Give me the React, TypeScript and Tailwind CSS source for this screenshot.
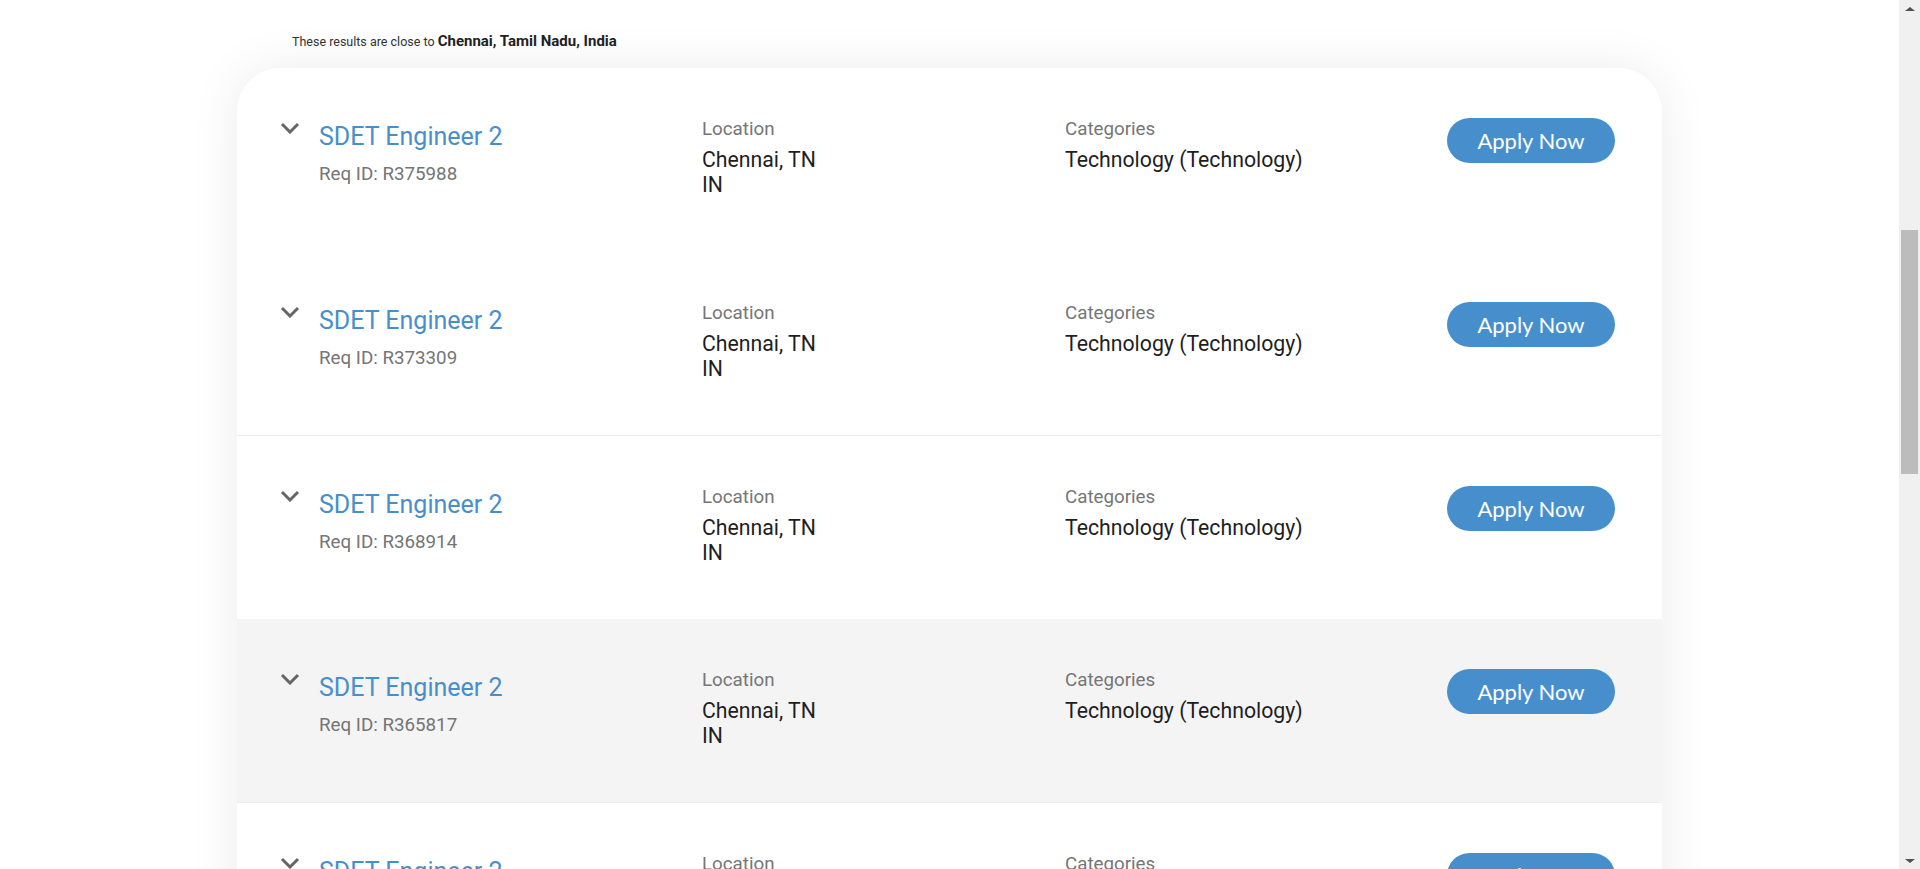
import clsx from "clsx";

type Job = { id: string; reqId: string; hover?: boolean; divider?: boolean };

const jobs: Job[] = [
  { id: "1", reqId: "R375988" },
  { id: "2", reqId: "R373309" },
  { id: "3", reqId: "R368914", divider: true },
  { id: "4", reqId: "R365817", hover: true },
  { id: "5", reqId: "R363072", divider: true },
];

function Chevron() {
  return (
    <svg width="20" height="12" viewBox="0 0 20 12" fill="none" className="block">
      <path d="M2 2 L10 10 L18 2" stroke="#666666" strokeWidth="3" />
    </svg>
  );
}

function JobRow({ job }: { job: Job }) {
  return (
    <div
      className={clsx(
        "flex h-[183.5px] shrink-0 items-start pl-[43px] pr-[47px] pt-[50px]",
        job.hover ? "bg-[#f4f4f4]" : "bg-white",
        job.divider && "border-t border-[#ececec]"
      )}
    >
      <div className="w-[39px] pt-[4px]">
        <Chevron />
      </div>
      <div className="w-[383px]">
        <div className="pt-[4px] text-[25px] leading-[30px] text-[#478fcc]">SDET Engineer 2</div>
        <div className="mt-[10px] text-[18.75px] leading-[25px] text-[#757575]">Req ID: {job.reqId}</div>
      </div>
      <div className="w-[363px]">
        <div className="text-[18.75px] leading-[22px] text-[#767676]">Location</div>
        <div className="mt-[7px] text-[21.25px] leading-[25px] text-[#1e1e1e]">
          Chennai, TN
          <br />
          IN
        </div>
      </div>
      <div className="flex-1">
        <div className="text-[18.75px] leading-[22px] text-[#767676]">Categories</div>
        <div className="mt-[7px] text-[21.25px] leading-[25px] text-[#1e1e1e]">Technology (Technology)</div>
      </div>
      <button
        type="button"
        className="h-[45px] w-[168px] rounded-full bg-[#478fcc] font-['Lato',sans-serif] text-[22px] text-white"
      >
        Apply Now
      </button>
    </div>
  );
}

function Scrollbar() {
  return (
    <div className="flex h-full w-[21px] shrink-0 flex-col bg-[#f0f0f0]">
      <div className="flex h-[17px] items-center justify-center">
        <div className="h-0 w-0 border-x-[5px] border-b-[4px] border-x-transparent border-b-[#505050]" />
      </div>
      <div className="flex-1 px-[2px] pt-[213px]">
        <div className="h-[244px] w-[17px] bg-[#bcbcbc]" />
      </div>
      <div className="flex h-[17px] items-center justify-center">
        <div className="h-0 w-0 border-x-[5px] border-t-[4px] border-x-transparent border-t-[#505050]" />
      </div>
    </div>
  );
}

export default function App() {
  return (
    <div className="flex h-screen overflow-hidden bg-white font-['Roboto',sans-serif]">
      <main className="min-w-0 flex-1 overflow-hidden">
        <div className="mx-auto w-[1425px]">
          <p className="pl-[55px] pt-[31px] text-[12.5px] leading-[20px] text-[#333333]">
            These results are close to{" "}
            <span className="text-[15px] font-bold text-[#222222]">Chennai, Tamil Nadu, India</span>
          </p>
          <div className="mt-[16px] overflow-hidden rounded-[44px] bg-white shadow-[0_0_50px_rgba(0,0,0,0.08)]">
            {jobs.map((job) => (
              <JobRow key={job.id} job={job} />
            ))}
          </div>
        </div>
      </main>
      <Scrollbar />
    </div>
  );
}
